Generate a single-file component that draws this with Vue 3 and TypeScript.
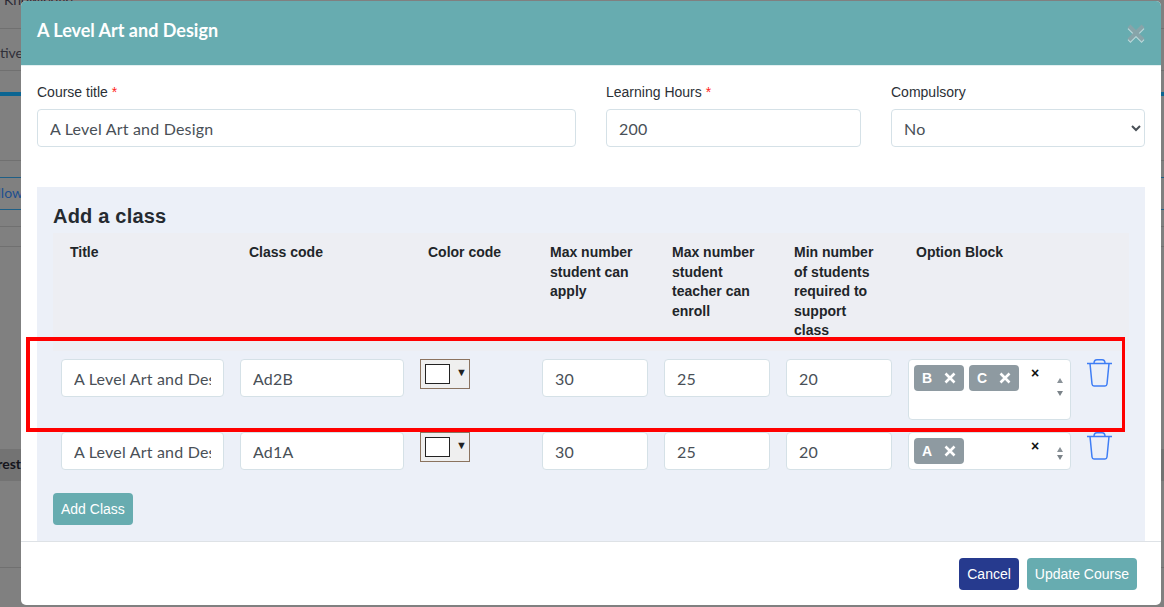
<script setup lang="ts">
interface Row { title: string; code: string; tags: string[]; tall: boolean }
const rows: Row[] = [
  { title: 'A Level Art and Design', code: 'Ad2B', tags: ['B', 'C'], tall: true },
  { title: 'A Level Art and Design', code: 'Ad1A', tags: ['A'], tall: false },
]
const heads: string[] = [
  'Title', 'Class code', 'Color code', 'Max number student can apply',
  'Max number student teacher can enroll', 'Min number of students required to support class', 'Option Block', '',
]
</script>

<template>
  <div class="page">
    <div class="backdrop">
      <span class="bg-text bg-kn">Knowledge</span>
      <span class="bg-text bg-ctiv">Active</span>
      <span class="bg-text bg-allo">Swallow</span>
      <div class="bg-line" style="top:28px"></div>
      <div class="bg-line" style="top:70px"></div>
      <div class="bg-bar"></div>
      <div class="bg-line" style="top:160px"></div>
      <div class="bg-line blue" style="top:177px"></div>
      <div class="bg-line blue" style="top:209px"></div>
      <div class="bg-line" style="top:226px"></div>
      <div class="bg-line" style="top:246px"></div>
      <div class="bg-band"><span>Interest</span></div>
      <div class="bg-line" style="top:567px"></div>
    </div>

    <section class="modal">
      <header class="modal-head">
        <h2>A Level Art and Design</h2>
        <svg class="close" width="20" height="20" viewBox="0 0 20 20" aria-hidden="true">
          <path d="M3 4.5 L17 18.5 M17 4.5 L3 18.5" stroke="#fff" stroke-opacity=".55" stroke-width="4" fill="none" />
          <path d="M3 3 L17 17 M17 3 L3 17" stroke="#87a4a9" stroke-width="4" fill="none" />
        </svg>
      </header>

      <div class="modal-body">
        <div class="fields">
          <label class="field">
            <span class="lbl">Course title <em>*</em></span>
            <input class="ctl" value="A Level Art and Design" />
          </label>
          <label class="field">
            <span class="lbl">Learning Hours <em>*</em></span>
            <input class="ctl" value="200" />
          </label>
          <label class="field">
            <span class="lbl">Compulsory</span>
            <select class="ctl sel"><option>No</option><option>Yes</option></select>
          </label>
        </div>

        <div class="panel">
          <h3>Add a class</h3>
          <div class="grid head">
            <div v-for="(h, i) in heads" :key="i" class="th">{{ h }}</div>
          </div>
          <div v-for="r in rows" :key="r.code" class="grid row">
            <div class="td"><input class="ctl" :value="r.title" /></div>
            <div class="td"><input class="ctl" :value="r.code" /></div>
            <div class="td">
              <div class="color"><span class="swatch"></span><span class="caret">▼</span></div>
            </div>
            <div class="td"><input class="ctl" value="30" /></div>
            <div class="td"><input class="ctl" value="25" /></div>
            <div class="td"><input class="ctl" value="20" /></div>
            <div class="td">
              <div class="multi" :class="{ tall: r.tall }">
                <span v-for="t in r.tags" :key="t" class="tag">
                  <b>{{ t }}</b>
                  <svg width="12" height="12" viewBox="0 0 12 12" aria-hidden="true">
                    <path d="M1.5 1.5 L10.5 10.5 M10.5 1.5 L1.5 10.5" stroke="#fff" stroke-width="2.6" fill="none" />
                  </svg>
                </span>
                <span class="clear">×</span>
                <svg class="spin" :class="{ wide: r.tall }" width="8" :height="r.tall ? 18 : 13" :viewBox="r.tall ? '0 0 8 18' : '0 0 8 13'" aria-hidden="true">
                  <path d="M4 0 L7 5 H1 Z" fill="#8a9298" />
                  <path v-if="r.tall" d="M1 13 H7 L4 18 Z" fill="#7b8389" />
                  <path v-else d="M1 8 H7 L4 13 Z" fill="#7b8389" />
                </svg>
              </div>
            </div>
            <div class="td trash">
              <svg width="25" height="28" viewBox="0 0 25 28" fill="none" stroke="#3f7ef5" stroke-width="1.5" aria-hidden="true">
                <path d="M0 4.5 H25" />
                <path d="M7 4.5 C7 1.5 8 .8 10 .8 H15 C17 .8 18 1.5 18 4.5" />
                <path d="M3 4.5 L5 25 C5.2 26.5 6 27 7 27 H18 C19 27 19.8 26.5 20 25 L22 4.5" />
              </svg>
            </div>
          </div>
          <button class="btn add" type="button">Add Class</button>
        </div>
      </div>

      <footer class="modal-foot">
        <button class="btn cancel" type="button">Cancel</button>
        <button class="btn add" type="button">Update Course</button>
      </footer>
    </section>

    <div class="callout"></div>
  </div>
</template>

<style>
html, body { margin: 0; background: #808080; overflow: hidden; }
</style>

<style scoped>
.page {
  position: relative;
  width: 1164px;
  height: 607px;
  overflow: hidden;
  background: #808080;
  font-family: "Liberation Sans", Arial, sans-serif;
  color: #212529;
}
.backdrop { position: absolute; inset: 0; }
.bg-line { position: absolute; left: 0; right: 0; height: 1px; background: #707070; }
.bg-line.blue { background: #1f5f86; }
.bg-bar { position: absolute; left: 0; right: 0; top: 92px; height: 4px; background: #0b6592; }
.bg-band { position: absolute; left: 0; right: 0; top: 449px; height: 32px; background: #737373; }
.bg-band span {
  position: absolute; right: 1143px; top: 6px; font: 700 14px "Lato", sans-serif; color: #15151c; white-space: nowrap;
}
.bg-text { position: absolute; font: 14px "Lato", sans-serif; white-space: nowrap; }
.bg-kn { left: 4px; top: -9px; color: #2a2a35; }
.bg-ctiv { right: 1141px; top: 44px; color: #30303a; }
.bg-allo { right: 1141px; top: 184px; color: #1d4f8f; }

.modal {
  position: absolute;
  left: 21px;
  top: 1px;
  width: 1140px;
  height: 604px;
  background: #fff;
  border-radius: 5px;
  overflow: hidden;
  display: flex;
  flex-direction: column;
}
.modal-head {
  height: 64px;
  flex: none;
  background: #67acb0;
  display: flex;
  align-items: center;
  justify-content: space-between;
  padding: 0 16px;
  border-bottom: 1px solid #e3f0f1;
  box-sizing: content-box;
}
.modal-head h2 { margin: 0; font: 700 18px "Lato", sans-serif; color: #fff; position: relative; top: -3px; }
.close { position: relative; top: 0; right: -1px; }
.modal-body { flex: 1; padding: 16px 16px 0; display: flex; flex-direction: column; min-height: 0; }
.fields { display: grid; grid-template-columns: 539px 255px 254px; column-gap: 30px; }
.field { display: flex; flex-direction: column; }
.lbl { font-size: 14px; line-height: 20px; margin-bottom: 7px; color: #2b3036; }
.lbl em { color: #f22; font-style: normal; }
.ctl {
  box-sizing: border-box;
  width: 100%;
  height: 38px;
  border: 1px solid #d5e1e7;
  border-radius: 4px;
  padding: 0 12px;
  background: #fff;
  font: 16px "Lato", sans-serif;
  letter-spacing: .2px;
  color: #495057;
  outline: none;
}
.sel { padding-left: 8px; }
.panel {
  margin-top: 40px;
  flex: 1;
  background: #ecf0f8;
  padding: 16px 16px 0;
  min-height: 0;
}
.panel h3 { margin: 0 0 4px; font-size: 20px; line-height: 26px; font-weight: 700; letter-spacing: .2px; color: #252a30; }
.grid { display: grid; grid-template-columns: 179px 180px 122px 122px 122px 122px 179px 50px; }
.head { background: #edeef3; height: 118px; }
.th { padding: 10px 16px 0 17px; font-size: 14px; font-weight: 700; line-height: 19.6px; color: #212529; }
.th:nth-child(n+3) { padding-left: 16px; }
.row { padding-top: 8px; padding-bottom: 4px; }
.td { padding: 0 8px; min-width: 0; }
.color {
  box-sizing: border-box;
  width: 50px;
  height: 30px;
  border: 1px solid #8b735f;
  background: #efefef;
  display: flex;
  align-items: center;
  padding-left: 4px;
  gap: 6px;
}
.swatch { box-sizing: border-box; width: 25px; height: 20px; background: #fff; border: 1px solid #222; }
.caret { font-size: 11px; color: #222; line-height: 1; position: relative; top: -2px; }
.multi {
  position: relative;
  box-sizing: border-box;
  width: 163px;
  height: 38px;
  background: #fff;
  border: 1px solid #d5e1e7;
  border-radius: 4px;
  padding: 5px;
  display: flex;
  align-items: flex-start;
  gap: 5px;
}
.multi.tall { height: 61px; }
.tag {
  box-sizing: border-box;
  width: 50px;
  height: 26px;
  background: #8e9aa1;
  border-radius: 4px;
  color: #fff;
  display: flex;
  align-items: center;
  justify-content: space-between;
  padding: 0 8px;
  font-size: 14px;
}
.clear {
  position: absolute;
  left: 122px;
  top: 5px;
  font-size: 14px;
  font-weight: 700;
  line-height: 16px;
  color: #111;
}
.spin { position: absolute; left: 147px; top: 14px; }
.spin.wide { top: 18px; }
.trash { padding: 0 8px; }
.trash svg { display: block; }
.btn {
  border: 0;
  border-radius: 4px;
  height: 32px;
  padding: 0 8px;
  font: 14px "Liberation Sans", Arial, sans-serif;
  color: #fff;
  cursor: pointer;
}
.add { background: #67acb0; }
.panel .add { margin-top: 19px; }
.cancel { background: #263a8e; }
.modal-foot {
  flex: none;
  height: 64px;
  box-sizing: border-box;
  border-top: 1px solid #dee2e6;
  padding: 16px 24px 0 0;
  display: flex;
  justify-content: flex-end;
  gap: 8px;
}
.callout {
  position: absolute;
  left: 26px;
  top: 337px;
  width: 1099px;
  height: 95px;
  box-sizing: border-box;
  border: solid #f00;
  border-width: 4px 3px 4px 4px;
  pointer-events: none;
}
</style>
